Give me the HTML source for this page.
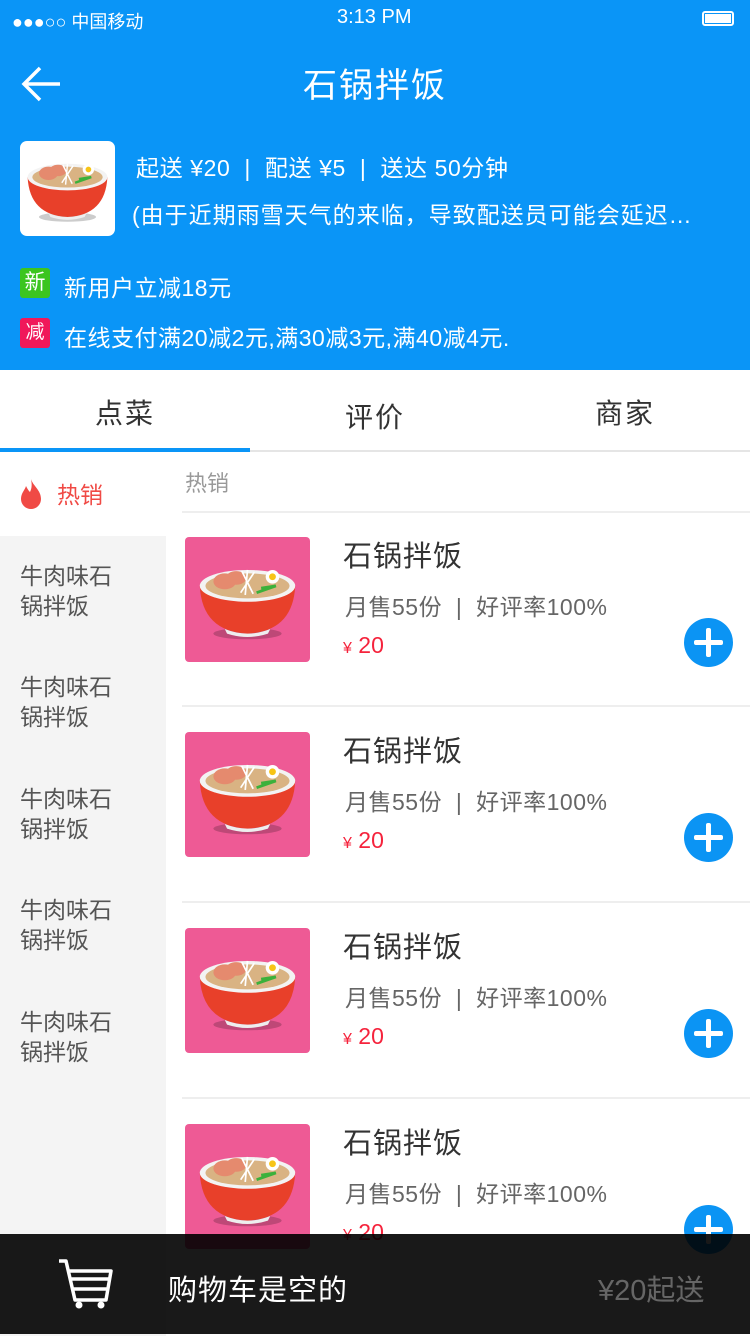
<!DOCTYPE html>
<html><head><meta charset="utf-8"><style>
*{margin:0;padding:0;box-sizing:border-box}
body{width:750px;height:1334px;overflow:hidden;position:relative;font-family:"Liberation Sans","Noto Sans CJK SC",sans-serif;background:#fff}
.abs{position:absolute}
.blue{background:#0a95f7;position:absolute;left:0;top:0;width:750px;height:370px;color:#fff}
.t{position:absolute;white-space:nowrap}
.item .name{font-size:29px;color:#333;letter-spacing:1px}
.item .sub{font-size:23px;color:#666;letter-spacing:.5px}
.item .price{font-size:23px;color:#f5233c}
.plus{position:absolute;width:49px;height:49px;border-radius:50%;background:#0b94f4}
.plus:before,.plus:after{content:"";position:absolute;background:#fff;border-radius:2px}
.plus:before{left:10px;top:22px;width:29px;height:5px}
.plus:after{left:22px;top:10px;width:5px;height:29px}
.side{font-size:23px;color:#555;line-height:30px}
</style></head><body>
<svg width="0" height="0" style="position:absolute"><defs>
<g id="bowl">
<ellipse cx="50" cy="80" rx="30" ry="5" fill="#000" opacity=".2"/>
<path d="M8 38 Q10 78 50 80 Q90 78 92 38 Z" fill="#e8402a"/>
<path d="M30 76 Q50 84 70 76 L68 80 Q50 86 32 80Z" fill="#eee"/>
<ellipse cx="50" cy="38" rx="42" ry="14" fill="#f3f3f3"/>
<ellipse cx="50" cy="38" rx="37" ry="11" fill="#d9b383"/>
<ellipse cx="30" cy="34" rx="10" ry="7" fill="#e58a6e"/>
<ellipse cx="40" cy="31" rx="9" ry="6" fill="#e58a6e"/>
<circle cx="72" cy="30" r="6" fill="#fff"/><circle cx="72" cy="30" r="3" fill="#f7c416"/>
<path d="M45 25 L55 45 M50 24 L48 46 M56 26 L44 44" stroke="#fff" stroke-width="1.5"/>
<path d="M58 44 L75 38 L62 40" stroke="#3bb13b" stroke-width="2.5" fill="none"/>
</g></defs></svg>

<div class="blue">
<div class="t" style="left:12px;top:8px;font-size:18px">●●●○○ 中国移动</div>
<div class="t" style="left:337px;top:6px;font-size:20px">3:13 PM</div>
<div class="abs" style="left:702px;top:11px;width:32px;height:15px;border:2px solid #fff;border-radius:3px;padding:1px"><div style="background:#fff;width:100%;height:100%"></div></div>
<svg class="abs" style="left:20px;top:66px" width="42" height="36"><path d="M40 18H4M20 2L4 18L20 34" stroke="#fff" stroke-width="3.5" fill="none"/></svg>
<div class="t" style="left:0;width:750px;text-align:center;top:58px;font-size:34px;letter-spacing:2px">石锅拌饭</div>
<div class="abs" style="left:20px;top:141px;width:95px;height:95px;background:#fff;border-radius:7px"><svg width="95" height="95" viewBox="0 0 100 100"><use href="#bowl"/></svg></div>
<div class="t" style="left:136px;top:149px;font-size:23px;letter-spacing:.6px">起送 ¥20 &nbsp;|&nbsp; 配送 ¥5 &nbsp;|&nbsp; 送达 50分钟</div>
<div class="t" style="left:132px;top:196px;font-size:23px;letter-spacing:1px">(由于近期雨雪天气的来临，导致配送员可能会延迟…</div>
<div class="abs" style="left:20px;top:268px;width:30px;height:30px;background:#3cc51f;border-radius:3px;font-size:21px;text-align:center;line-height:30px">新</div>
<div class="t" style="left:64px;top:269px;font-size:23px;letter-spacing:.5px">新用户立减18元</div>
<div class="abs" style="left:20px;top:318px;width:30px;height:30px;background:#f0185a;border-radius:3px;font-size:19px;text-align:center;line-height:30px">减</div>
<div class="t" style="left:64px;top:319px;font-size:23px;letter-spacing:.5px">在线支付满20减2元,满30减3元,满40减4元.</div>
</div>

<div class="abs" style="top:370px;left:0;width:750px;height:82px;border-bottom:2px solid #e5e5e5"></div>
<div class="t" style="left:0;width:250px;text-align:center;top:392px;font-size:28px;color:#333;letter-spacing:2px">点菜</div>
<div class="t" style="left:250px;width:250px;text-align:center;top:396px;font-size:28px;color:#333;letter-spacing:2px">评价</div>
<div class="t" style="left:500px;width:250px;text-align:center;top:392px;font-size:28px;color:#333;letter-spacing:2px">商家</div>
<div class="abs" style="left:0;top:448px;width:250px;height:4px;background:#0a95f7"></div>

<div class="abs" style="left:0;top:536px;width:166px;height:800px;background:#f4f4f4"></div>
<svg class="abs" style="left:20px;top:478px" width="22" height="32" viewBox="0 0 22 32"><path d="M11 1C13 8 21 12 21 21A10 10 0 0 1 1 21C1 15 5 12 6 8C8 12 9 13 10 14C12 10 12 6 11 1Z" fill="#f04a45"/></svg>
<div class="t" style="left:57px;top:476px;font-size:23px;color:#f04a45">热销</div>
<div class="t side" style="left:20px;top:561px">牛肉味石<br>锅拌饭</div>
<div class="t side" style="left:20px;top:672px">牛肉味石<br>锅拌饭</div>
<div class="t side" style="left:20px;top:784px">牛肉味石<br>锅拌饭</div>
<div class="t side" style="left:20px;top:895px">牛肉味石<br>锅拌饭</div>
<div class="t side" style="left:20px;top:1007px">牛肉味石<br>锅拌饭</div>

<div class="t" style="left:185px;top:466px;font-size:22px;color:#999">热销</div>
<div class="abs" style="left:182px;top:511px;width:568px;height:2px;background:#eee"></div>

<div class="item">
<div class="abs" style="left:185px;top:537px;width:125px;height:125px;background:#ee5a95;border-radius:4px"><svg width="125" height="125" viewBox="-5 -5 110 110"><use href="#bowl"/></svg></div>
<div class="t name" style="left:343px;top:533px">石锅拌饭</div>
<div class="t sub" style="left:345px;top:588px">月售55份 &nbsp;|&nbsp; 好评率100%</div>
<div class="t price" style="left:343px;top:632px"><span style="font-size:16px">¥</span> 20</div>
<div class="plus" style="left:684px;top:618px"></div>
<div class="abs" style="left:182px;top:705px;width:568px;height:2px;background:#eee"></div>
</div>
<div class="item">
<div class="abs" style="left:185px;top:732px;width:125px;height:125px;background:#ee5a95;border-radius:4px"><svg width="125" height="125" viewBox="-5 -5 110 110"><use href="#bowl"/></svg></div>
<div class="t name" style="left:343px;top:728px">石锅拌饭</div>
<div class="t sub" style="left:345px;top:783px">月售55份 &nbsp;|&nbsp; 好评率100%</div>
<div class="t price" style="left:343px;top:827px"><span style="font-size:16px">¥</span> 20</div>
<div class="plus" style="left:684px;top:813px"></div>
<div class="abs" style="left:182px;top:901px;width:568px;height:2px;background:#eee"></div>
</div>
<div class="item">
<div class="abs" style="left:185px;top:928px;width:125px;height:125px;background:#ee5a95;border-radius:4px"><svg width="125" height="125" viewBox="-5 -5 110 110"><use href="#bowl"/></svg></div>
<div class="t name" style="left:343px;top:924px">石锅拌饭</div>
<div class="t sub" style="left:345px;top:979px">月售55份 &nbsp;|&nbsp; 好评率100%</div>
<div class="t price" style="left:343px;top:1023px"><span style="font-size:16px">¥</span> 20</div>
<div class="plus" style="left:684px;top:1009px"></div>
<div class="abs" style="left:182px;top:1097px;width:568px;height:2px;background:#eee"></div>
</div>
<div class="item">
<div class="abs" style="left:185px;top:1124px;width:125px;height:125px;background:#ee5a95;border-radius:4px"><svg width="125" height="125" viewBox="-5 -5 110 110"><use href="#bowl"/></svg></div>
<div class="t name" style="left:343px;top:1120px">石锅拌饭</div>
<div class="t sub" style="left:345px;top:1175px">月售55份 &nbsp;|&nbsp; 好评率100%</div>
<div class="t price" style="left:343px;top:1219px"><span style="font-size:16px">¥</span> 20</div>
<div class="plus" style="left:684px;top:1205px"></div>
</div>

<div class="abs" style="left:0;top:1234px;width:750px;height:100px;background:rgba(0,0,0,0.9)"></div>
<svg class="abs" style="left:56px;top:1258px" width="60" height="52" viewBox="0 0 60 52"><path d="M3 3H10L19 42H50L55 13H12M14 21H53M16 31H51" stroke="#fff" stroke-width="3.5" fill="none" stroke-linejoin="round"/><circle cx="23" cy="47" r="3.5" fill="#fff"/><circle cx="45" cy="47" r="3.5" fill="#fff"/></svg>
<div class="t" style="left:168px;top:1267px;font-size:29px;color:#fff;letter-spacing:1px">购物车是空的</div>
<div class="t" style="left:598px;top:1267px;font-size:29px;color:#666">¥20起送</div>
</body></html>
